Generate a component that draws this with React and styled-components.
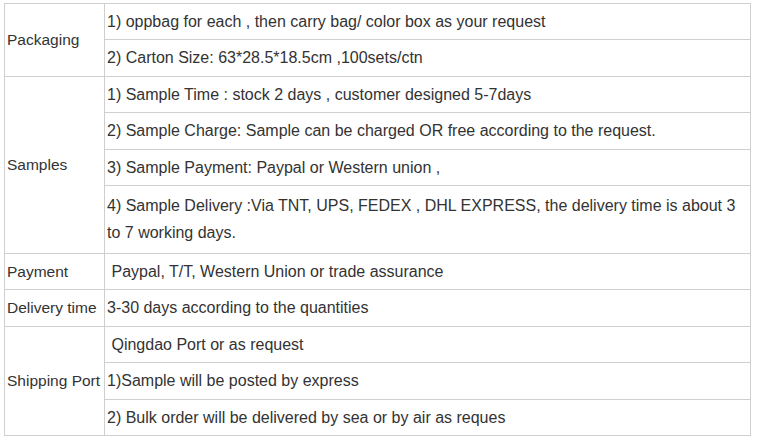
import React from "react"
import styled, { createGlobalStyle } from "styled-components"

const GlobalStyle = createGlobalStyle`
  body {
    margin: 0;
    background: #fff;
  }
`

const Page = styled.div`
  padding: 3px 0 0 4px;
`

const Table = styled.table`
  width: 747px;
  border-collapse: collapse;
  table-layout: fixed;
  font-family: "Liberation Sans", Arial, sans-serif;
  font-size: 16px;
  color: #333;
`

const Cell = styled.td`
  border: 1px solid #cfcfcf;
  padding: 2px 2px;
  line-height: 31.4px;
  vertical-align: middle;
  white-space: pre-wrap;
`

const Label = styled(Cell)`
  width: 100px;
  font-size: 15.5px;
  white-space: nowrap;
`

const Wrap = styled.span`
  display: block;
  line-height: 27px;
  padding: 4px 0 5px;
`

const rows = [
  {
    label: "Packaging",
    items: [
      "1) oppbag for each , then carry bag/ color box as your request",
      "2) Carton Size: 63*28.5*18.5cm ,100sets/ctn",
    ],
  },
  {
    label: "Samples",
    items: [
      "1) Sample Time : stock 2 days , customer designed 5-7days",
      "2) Sample Charge: Sample can be charged OR free according to the request.",
      "3) Sample Payment: Paypal or Western union ,",
      {
        wrap: true,
        text: "4) Sample Delivery :Via TNT, UPS, FEDEX , DHL EXPRESS, the delivery time is about 3 to 7 working days.",
      },
    ],
  },
  { label: "Payment", items: [" Paypal, T/T, Western Union or trade assurance"] },
  { label: "Delivery time", items: ["3-30 days according to the quantities"] },
  {
    label: "Shipping Port",
    items: [
      " Qingdao Port or as request",
      "1)Sample will be posted by express",
      "2) Bulk order will be delivered by sea or by air as reques",
    ],
  },
]

const App = () => {
  return (
    <Page>
      <GlobalStyle />
      <Table>
        <colgroup>
          <col style={{ width: 100 }} />
          <col />
        </colgroup>
        <tbody>
          {rows.map(group =>
            group.items.map((item, i) => (
              <tr key={group.label + i}>
                {i === 0 && <Label rowSpan={group.items.length}>{group.label}</Label>}
                <Cell>
                  {typeof item === "string" ? item : <Wrap>{item.text}</Wrap>}
                </Cell>
              </tr>
            ))
          )}
        </tbody>
      </Table>
    </Page>
  )
}

export default App
